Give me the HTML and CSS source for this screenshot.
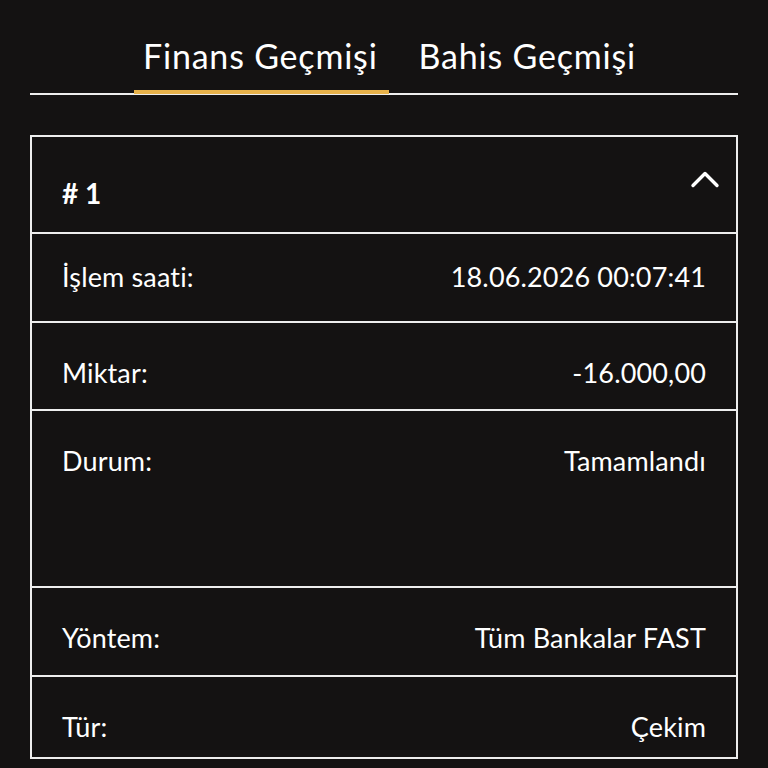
FILE: index.html
```html
<!DOCTYPE html>
<html lang="tr">
<head>
<meta charset="utf-8">
<link rel="stylesheet" href="styles.css">
</head>
<body>
<div class="page">
  <nav class="tabs">
    <div class="tab active">Finans Geçmişi</div>
    <div class="tab">Bahis Geçmişi</div>
  </nav>
  <section class="card">
    <div class="card-head">
      <span class="num"># 1</span>
      <svg class="chev" width="30" height="20" viewBox="0 0 30 20"><path d="M3 16.5 L15 4.5 L27 16.5" fill="none" stroke="#fff" stroke-width="3.4" stroke-linecap="round" stroke-linejoin="round"/></svg>
    </div>
    <div class="row first"><span>İşlem saati:</span><span>18.06.2026 00:07:41</span></div>
    <div class="row r2"><span>Miktar:</span><span>-16.000,00</span></div>
    <div class="row tall"><span>Durum:</span><span>Tamamlandı</span></div>
    <div class="row"><span>Yöntem:</span><span>Tüm Bankalar FAST</span></div>
    <div class="row last"><span>Tür:</span><span>Çekim</span></div>
  </section>
</div>
</body>
</html>
```

FILE: styles.css
```css
html, body {
  margin: 0;
  padding: 0;
  background: #141212;
  color: #fff;
  font-family: Lato, "Open Sans", sans-serif;
}
.page {
  padding: 0 30px;
}
.tabs {
  display: flex;
  justify-content: center;
  gap: 20px;
  border-bottom: 2px solid #eee;
  padding-top: 36px;
  padding-left: 12px;
}
.tab {
  font-size: 34px;
  letter-spacing: 0.8px;
  line-height: 40px;
  padding: 0 10px 14px;
  border-bottom: 4px solid transparent;
  margin-bottom: -1px;
}
.tab.active {
  border-bottom-color: #e8b24a;
  padding-left: 9px;
  padding-right: 11px;
}
.card {
  margin-top: 40px;
  border: 2px solid #eee;
  border-bottom: none;
}
.card-head {
  display: flex;
  justify-content: space-between;
  align-items: flex-start;
  height: 95px;
  padding: 0 16px 0 30px;
  border-bottom: 2px solid #eee;
}
.num {
  font-weight: 700;
  font-size: 28px;
  line-height: 1.2;
  margin-top: 40px;
}
.chev {
  margin-top: 32px;
}
.row {
  display: flex;
  justify-content: space-between;
  font-size: 27px;
  letter-spacing: 0.15px;
  line-height: 30px;
  height: 89px;
  box-sizing: border-box;
  padding: 35px 30px 0;
  border-bottom: 2px solid #eee;
}
.row.first {
  padding-top: 28px;
}
.row.r2 {
  height: 88px;
}
.row.tall {
  height: 177px;
}
.row.last {
  height: 82px;
}
```
